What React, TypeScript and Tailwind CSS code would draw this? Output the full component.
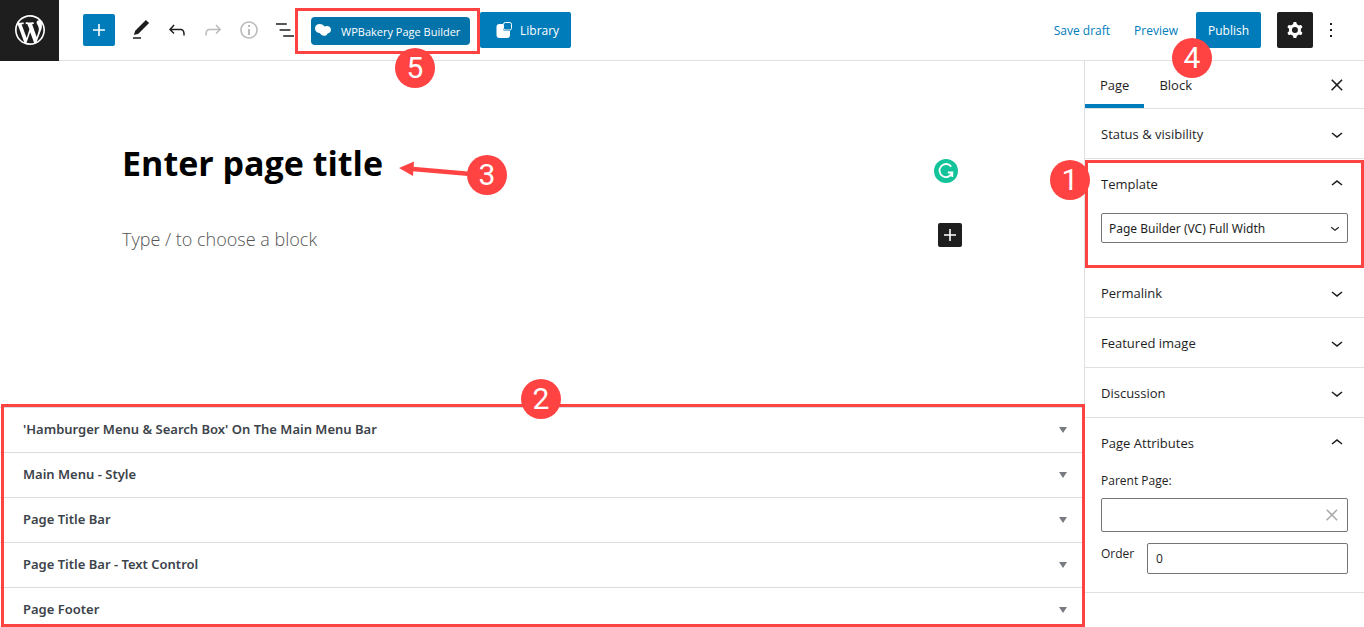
import React from "react";

const paths = {
  plus: "M18 11.2h-5.2V6h-1.6v5.2H6v1.6h5.2V18h1.6v-5.2H18z",
  edit: "M20.1 5.1L16.9 2 6.2 12.7l-1.3 4.4 4.5-1.3L20.1 5.1zM4 20.8h8v-1.5H4v1.5z",
  undo: "M18.3 11.7c-.6-.6-1.4-.9-2.3-.9H6.7l2.9-3.3-1.1-1-4.5 5L8.5 16l1-1-2.7-2.7H16c.5 0 .9.2 1.3.5 1 1 1 3.4 1 4.5v.3h1.5v-.2c0-1.5 0-4.3-1.5-5.7z",
  redo: "M15.6 6.5l-1.1 1 2.9 3.3H8c-.9 0-1.7.3-2.3.9-1.4 1.5-1.4 4.2-1.4 5.6v.2h1.5v-.3c0-1.1 0-3.5 1-4.5.3-.3.7-.5 1.3-.5h9.2L14.5 15l1.1 1.1 4.6-4.6-4.6-5z",
  info: "M12 3.2c-4.8 0-8.8 3.9-8.8 8.8 0 4.8 3.9 8.8 8.8 8.8 4.8 0 8.8-3.9 8.8-8.8 0-4.8-4-8.8-8.8-8.8zm0 16c-4 0-7.2-3.3-7.2-7.2C4.8 8 8 4.8 12 4.8s7.2 3.3 7.2 7.2c0 4-3.2 7.2-7.2 7.2zM11 17h2v-6h-2v6zm0-8h2V7h-2v2z",
  list: "M13.8 5.2H3v1.5h10.8V5.2zm-3.6 12v1.5H21v-1.5H10.2zm7.2-6H6.6v1.5h10.8v-1.5z",
  cog: "M10.289 4.836A1 1 0 0111.275 4h1.306a1 1 0 01.987.836l.244 1.466c.787.26 1.503.679 2.108 1.218l1.393-.522a1 1 0 011.216.437l.653 1.13a1 1 0 01-.23 1.273l-1.148.944a6.025 6.025 0 010 2.435l1.149.946a1 1 0 01.23 1.272l-.653 1.13a1 1 0 01-1.216.437l-1.394-.522c-.605.54-1.32.958-2.108 1.218l-.244 1.466a1 1 0 01-.987.836h-1.306a1 1 0 01-.986-.836l-.244-1.466a5.995 5.995 0 01-2.108-1.218l-1.394.522a1 1 0 01-1.217-.436l-.653-1.131a1 1 0 01.23-1.272l1.149-.946a6.026 6.026 0 010-2.435l-1.148-.944a1 1 0 01-.23-1.272l.653-1.131a1 1 0 011.217-.437l1.393.522a5.994 5.994 0 012.108-1.218l.244-1.466zM14.929 12a3 3 0 11-6 0 3 3 0 016 0z",
  more: "M13 19h-2v-2h2v2zm0-6h-2v-2h2v2zm0-6h-2V5h2v2z",
  down: "M17.5 11.6L12 16l-5.5-4.4.9-1.2L12 14l4.5-3.6 1 1.2z",
  up: "M6.5 12.4L12 8l5.5 4.4-.9 1.2L12 10l-4.5 3.6-1-1.2z",
  close: "M13 11.9l4.6-4.7-1.1-1-4.6 4.6-4.6-4.6-1.1 1 4.6 4.7-4.8 4.8 1.1 1 4.8-4.7 4.7 4.7 1.1-1z",
};

function Icon({ name, className = "size-6" }: { name: keyof typeof paths; className?: string }) {
  return (
    <svg viewBox="0 0 24 24" fill="currentColor" fillRule="evenodd" aria-hidden="true" className={className}>
      <path d={paths[name]} />
    </svg>
  );
}

function Badge({ n, className }: { n: number; className: string }) {
  return (
    <span
      className={`absolute z-20 flex size-10 items-center justify-center rounded-full bg-[#ff4343] font-[Roboto,sans-serif] text-3xl leading-none text-white ${className}`}
    >
      {n}
    </span>
  );
}

function Frame({ className }: { className: string }) {
  return <span className={`pointer-events-none absolute z-10 border-3 border-[#ff4343] ${className}`} />;
}

function ToolButton({ name, label, disabled }: { name: keyof typeof paths; label: string; disabled?: boolean }) {
  return (
    <button aria-label={label} disabled={disabled} className="flex h-9 w-9 items-center justify-center disabled:text-[#bbb]">
      <Icon name={name} />
    </button>
  );
}

function TopBar() {
  return (
    <header className="flex h-[61px] shrink-0 items-center border-b border-[#e0e0e0]">
      <a href="#" aria-label="View pages" className="flex h-[61px] w-[59px] items-center justify-center bg-[#1e1e1e] text-white">
        <svg viewBox="0 0 20 20" fill="currentColor" aria-hidden="true" className="size-[30px]">
          <path d="M20 10c0-5.51-4.49-10-10-10C4.48 0 0 4.49 0 10c0 5.52 4.48 10 10 10 5.51 0 10-4.48 10-10zM7.78 15.37L4.37 6.22c.55-.02 1.17-.08 1.17-.08.5-.06.44-1.13-.06-1.11 0 0-1.45.11-2.37.11-.18 0-.37 0-.58-.01C4.12 2.69 6.87 1.11 10 1.11c2.33 0 4.45.87 6.05 2.34-.68-.11-1.65.39-1.65 1.58 0 .74.45 1.36.9 2.1.35.61.55 1.36.55 2.46 0 1.49-1.4 5-1.4 5l-3.03-8.37c.54-.02.82-.17.82-.17.5-.05.44-1.25-.06-1.22 0 0-1.44.12-2.38.12-.87 0-2.33-.12-2.33-.12-.5-.03-.56 1.2-.06 1.22l.92.08 1.26 3.41zM17.41 10c.24-.64.74-1.87.43-4.25.7 1.29 1.05 2.71 1.05 4.25 0 3.29-1.73 6.24-4.4 7.78.97-2.59 1.94-5.2 2.92-7.78zM6.1 18.09C3.12 16.65 1.11 13.53 1.11 10c0-1.3.23-2.48.72-3.59C3.25 10.3 4.67 14.2 6.1 18.09zm4.03-6.63l2.58 6.98c-.86.29-1.76.45-2.71.45-.79 0-1.57-.11-2.29-.33.81-2.38 1.62-4.74 2.42-7.1z" />
        </svg>
      </a>
      <button aria-label="Add block" className="ml-6 mr-2 flex size-8 items-center justify-center rounded-xs bg-[#007cba] text-white">
        <Icon name="plus" />
      </button>
      <div className="flex">
        <ToolButton name="edit" label="Tools" />
        <ToolButton name="undo" label="Undo" />
        <ToolButton name="redo" label="Redo" disabled />
        <ToolButton name="info" label="Details" disabled />
        <ToolButton name="list" label="List view" />
      </div>
      <div className="relative ml-2 mt-0.5">
        <button className="flex h-7 w-[159px] items-center rounded bg-[#0473aa] pl-1 text-[11px] font-medium text-white">
          <svg viewBox="0 0 16 12" fill="currentColor" aria-hidden="true" className="mb-0.5 mr-2.5 h-3 w-4">
            <path d="M4.700 0c2.300 0 4 1 4.700 2.500.6-.4 1.400-.6 2.300-.6 2.500 0 4.300 1.500 4.300 3.800 0 2-1.400 3.400-3.400 3.700-.6 1.500-1.800 2.400-3.500 2.400-1.900 0-3.400-.9-4-2.500C2.100 9 0 7 0 4.300 0 1.800 1.900 0 4.700 0z" />
          </svg>
          <span className="whitespace-nowrap pt-0.5">WPBakery Page Builder</span>
        </button>
        <Frame className="-inset-y-[9px] -left-4 -right-2.5" />
        <Badge n={5} className="left-[84px] top-[31px]" />
      </div>
      <button className="ml-2.5 flex h-9 items-center gap-1 rounded-xs bg-[#007cba] px-3 text-xs font-medium text-white">
        <svg viewBox="0 0 24 24" fill="none" aria-hidden="true" className="size-6">
          <path d="M7.500 6H11v4.500A2.500 2.500 0 0013.500 13H18v4a3 3 0 01-3 3H7.500a3 3 0 01-3-3V9a3 3 0 013-3z" fill="currentColor" />
          <rect x="11.500" y="4.500" width="8" height="7.500" rx="1.800" stroke="currentColor" />
        </svg>
        <span className="pt-0.5">Library</span>
      </button>
      <div className="relative ml-auto flex items-center pr-[21px] text-xs">
        <button className="mr-6 pt-0.5 text-[#007cba]">Save draft</button>
        <button className="mr-[18px] pt-0.5 text-[#007cba]">Preview</button>
        <div className="relative">
          <button className="h-9 w-[65px] rounded-xs bg-[#007cba] pt-0.5 font-medium text-white">Publish</button>
          <Badge n={4} className="-left-6 top-[26px]" />
        </div>
        <button aria-label="Settings" className="ml-4 flex size-9 items-center justify-center rounded-xs bg-[#1e1e1e] text-white">
          <Icon name="cog" />
        </button>
        <button aria-label="Options" className="ml-1.5">
          <Icon name="more" />
        </button>
      </div>
    </header>
  );
}

const metaBoxes = [
  "'Hamburger Menu & Search Box' On The Main Menu Bar",
  "Main Menu - Style",
  "Page Title Bar",
  "Page Title Bar - Text Control",
  "Page Footer",
];

function Editor() {
  return (
    <main className="flex min-w-0 flex-1 flex-col">
      <div className="shrink-0 px-6 pb-[150px] pt-[77px]">
        <div className="mx-auto max-w-[840px]">
          <div className="flex items-center justify-between">
            <div className="relative">
              <h1 className="text-[34px] font-bold leading-[50px] text-black">Enter page title</h1>
              <svg viewBox="0 0 72 18" aria-hidden="true" className="absolute left-full top-[22px] ml-4 h-[18px] w-[72px]">
                <path d="M14 9L72 14" stroke="#ff4343" strokeWidth="4.500" />
                <path d="M0 8L15 1.500L14 16z" fill="#ff4343" />
              </svg>
              <Badge n={3} className="left-full top-[17px] ml-[84px]" />
            </div>
            <button aria-label="Writing assistant" className="mr-1 mt-4">
              <svg viewBox="0 0 24 24" aria-hidden="true" className="size-6">
                <circle cx="12" cy="12" r="12" fill="#15c39a" />
                <path d="M17.200 7.600A6.500 6.500 0 1018.200 13.500H13.800M18.300 13.500V18" fill="none" stroke="#fff" strokeWidth="1.800" />
              </svg>
            </button>
          </div>
          <div className="mt-[25px] flex items-center justify-between pt-2">
            <p className="text-lg font-light leading-9 text-[#555]">Type / to choose a block</p>
            <button aria-label="Add block" className="mb-2 flex size-6 items-center justify-center rounded-xs bg-[#1e1e1e] text-white">
              <Icon name="plus" />
            </button>
          </div>
        </div>
      </div>
      <section className="relative min-h-0 flex-1">
        <div className="h-full overflow-hidden">
          {metaBoxes.map((title) => (
            <button
              key={title}
              className="flex h-[45px] w-full items-center justify-between border-t border-[#dcdcde] pl-[23px] pr-[17px] text-left font-['Noto_Sans',sans-serif] text-[13px] font-semibold text-[#3c434a]"
            >
              {title}
              <svg viewBox="0 0 8 6" fill="#787c82" aria-hidden="true" className="h-1.5 w-2">
                <path d="M0 0h8L4 6z" />
              </svg>
            </button>
          ))}
        </div>
        <Frame className="-right-px -top-[3px] bottom-0 left-px" />
        <Badge n={2} className="-top-7 left-1/2 -ml-[21px]" />
      </section>
    </main>
  );
}

function Panel({ title, open, children }: { title: string; open?: boolean; children?: React.ReactNode }) {
  return (
    <section className="relative border-b border-[#e0e0e0]">
      <h2>
        <button aria-expanded={!!open} className="flex h-[49px] w-full items-center justify-between pl-4 pr-[15px] text-[13px] font-medium">
          <span className="pt-0.5">{title}</span>
          <Icon name={open ? "up" : "down"} />
        </button>
      </h2>
      {children}
    </section>
  );
}

function Sidebar() {
  return (
    <aside className="w-[280px] shrink-0 border-l border-[#e0e0e0]">
      <div className="flex h-12 items-stretch border-b border-[#e0e0e0] pr-[15px] text-[13px] font-medium">
        <button className="border-b-4 border-[#007cba] px-[15px] pt-1.5">Page</button>
        <button className="px-[15px] pt-0.5">Block</button>
        <button aria-label="Close settings" className="ml-auto">
          <Icon name="close" />
        </button>
      </div>
      <Panel title="Status & visibility" />
      <Panel title="Template" open>
        <div className="relative px-4 pb-6 pt-[5px]">
          <select
            aria-label="Template"
            defaultValue="full"
            className="h-[30px] w-full appearance-none rounded-xs border border-[#757575] bg-white px-[7px] pt-0.5 font-['Noto_Sans',sans-serif] text-xs"
          >
            <option value="full">Page Builder (VC) Full Width</option>
          </select>
          <Icon name="down" className="pointer-events-none absolute right-5 top-[11px] size-[18px]" />
        </div>
        <Frame className="inset-x-0 -bottom-px top-px" />
        <Badge n={1} className="-left-[35px] top-px" />
      </Panel>
      <Panel title="Permalink" />
      <Panel title="Featured image" />
      <Panel title="Discussion" />
      <Panel title="Page Attributes" open>
        <div className="px-4 pb-[18px] text-xs">
          <label htmlFor="parent-page" className="block h-[31px] pt-1 leading-5">
            Parent Page:
          </label>
          <div className="relative">
            <input id="parent-page" className="block h-[34px] w-full rounded-xs border border-[#757575] px-2" />
            <button aria-label="Clear parent page" className="absolute right-1 top-[5px] text-[#aaa]">
              <Icon name="close" />
            </button>
          </div>
          <div className="mt-[11px] flex">
            <label htmlFor="order" className="w-[46px] pt-px leading-5">
              Order
            </label>
            <input id="order" defaultValue="0" className="h-[31px] min-w-0 flex-1 rounded-xs border border-[#757575] px-2" />
          </div>
        </div>
      </Panel>
    </aside>
  );
}

export default function App() {
  return (
    <div className="flex h-screen flex-col overflow-hidden bg-white font-['Open_Sans',sans-serif] text-[#1e1e1e]">
      <TopBar />
      <div className="flex min-h-0 flex-1">
        <Editor />
        <Sidebar />
      </div>
    </div>
  );
}
